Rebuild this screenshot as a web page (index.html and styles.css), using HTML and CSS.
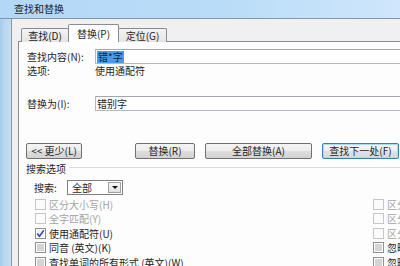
FILE: index.html
```html
<!DOCTYPE html>
<html lang="zh-CN">
<head>
    <meta charset="UTF-8">
    <title>查找和替换</title>
    <link rel="stylesheet" href="styles.css">
</head>
<body>
    <div class="titlebar">查找和替换</div>
    <div class="window-body">
        <div class="frame"></div>
        <div class="client">
            <div class="tabs">
                <div class="tab tab-find">查找(D)</div>
                <div class="tab tab-replace active">替换(P)</div>
                <div class="tab tab-goto">定位(G)</div>
            </div>
            <div class="panel">
                <div class="field-row">
                    <span class="field-label">查找内容(N):</span>
                    <div class="textbox"><span class="selected">错*字</span></div>
                </div>
                <div class="field-row options-row">
                    <span class="field-label">选项:</span>
                    <span>使用通配符</span>
                </div>
                <div class="field-row replace-row">
                    <span class="field-label">替换为(I):</span>
                    <div class="textbox">错别字</div>
                </div>

                <div class="buttons">
                    <button class="btn btn-less">&lt;&lt; 更少(L)</button>
                    <button class="btn btn-replace">替换(R)</button>
                    <button class="btn btn-all">全部替换(A)</button>
                    <button class="btn btn-next default">查找下一处(F)</button>
                </div>

                <div class="section-title"><span>搜索选项</span></div>
                <div class="search-row">
                    <span class="search-label">搜索:</span>
                    <div class="select">
                        <span>全部</span>
                        <span class="select-arrow"></span>
                    </div>
                </div>

                <!-- options: left / right columns -->
                <div class="checks">
                    <div class="check disabled"><span class="box"></span>区分大小写(H)</div>
                    <div class="check disabled"><span class="box"></span>区分前缀(X)</div>
                    <div class="check disabled"><span class="box"></span>全字匹配(Y)</div>
                    <div class="check disabled"><span class="box"></span>区分后缀(T)</div>
                    <div class="check checked">
                        <span class="box">
                            <svg width="9" height="9" viewBox="0 0 9 9"><path d="M1.2 4.6 L3.4 7.2 L7.8 1.4" fill="none" stroke="#2a44a8" stroke-width="1.5"/></svg>
                        </span>使用通配符(U)
                    </div>
                    <div class="check disabled"><span class="box"></span>区分全/半角(M)</div>
                    <div class="check"><span class="box"></span>同音 (英文)(K)</div>
                    <div class="check"><span class="box"></span>忽略标点符号(S)</div>
                    <div class="check"><span class="box"></span>查找单词的所有形式 (英文)(W)</div>
                    <div class="check"><span class="box"></span>忽略空格(W)</div>
                </div>
            </div>
        </div>
    </div>
</body>
</html>
```

FILE: styles.css
```css
body {
    margin: 0;
    width: 400px;
    height: 266px;
    overflow: hidden;
    background-color: #f0f0f0;
    font-family: "Noto Sans CJK SC", "Liberation Sans", sans-serif;
    font-size: 10px;
    color: #1e1e1e;
}
.titlebar {
    height: 18px;
    line-height: 17px;
    padding-left: 14px;
    background: linear-gradient(to right, #b3d8f7, #b9dcf8 55%, #cfe6fb);
    border-bottom: 1px solid #8796a5;
}
.window-body {
    display: flex;
    height: 247px;
}
.frame {
    width: 11px;
    background: linear-gradient(to right, #a8cbea, #b7d7f2 40%, #c3def4);
}
.client {
    flex: 1;
    border-left: 1px solid #8a97a4;
    padding: 5px 0 0 6px;
    overflow: hidden;
}
/* tabs */
.tabs {
    display: flex;
    align-items: flex-end;
    margin-left: 3px;
    margin-bottom: -1px;
    position: relative;
    z-index: 1;
}
.tab {
    box-sizing: border-box;
    height: 14px;
    line-height: 13px;
    text-align: center;
    border: 1px solid #898c95;
    border-bottom: none;
    background: linear-gradient(#f3f3f3, #e5e5e5);
    margin-right: -1px;
    border-radius: 2px 2px 0 0;
}
.tab-find {
    width: 48px;
}
.tab-replace {
    width: 51px;
}
.tab-goto {
    width: 49px;
}
.tab.active {
    height: 18px;
    line-height: 17px;
    background: #fff;
}
/* tab page */
.panel {
    box-sizing: border-box;
    width: 440px;
    height: 240px;
    border: 1px solid #898c95;
    background-color: #fdfdfd;
    padding: 7px 0 0 8px;
}
.field-row {
    display: flex;
    align-items: center;
    height: 15px;
}
.field-label {
    width: 68px;
    flex-shrink: 0;
}
.textbox {
    box-sizing: border-box;
    flex: 1;
    height: 15px;
    line-height: 13px;
    border: 1px solid #b5b8bf;
    border-top-color: #a3a6ad;
    background-color: #fff;
    padding-left: 1px;
}
.selected {
    display: inline-block;
    background-color: #4a9be6;
    color: #0f2440;
    padding: 0 1px;
    line-height: 12px;
}
.options-row {
    height: 12px;
}
.replace-row {
    margin-top: 20px;
}
/* buttons */
.buttons {
    display: flex;
    margin-top: 32px;
    margin-left: -1px;
}
.btn {
    box-sizing: border-box;
    height: 16px;
    padding: 0;
    font-family: inherit;
    font-size: 10px;
    line-height: 14px;
    color: #1e1e1e;
    border: 1px solid #707070;
    border-radius: 2px;
    background: linear-gradient(#f4f4f4, #ececec 50%, #dedede 50%, #d2d2d2);
}
.btn-less {
    width: 56px;
}
.btn-replace {
    width: 60px;
    margin-left: 53px;
}
.btn-all {
    width: 107px;
    margin-left: 10px;
}
.btn-next {
    width: 77px;
    margin-left: 10px;
}
.btn.default {
    border-color: #3c7fb1;
    box-shadow: inset 0 0 0 1px #a8dcf6;
    background: linear-gradient(#f6f6f6, #eeeeee 50%, #e3e3e3 50%, #d9d9d9);
}
/* search options */
.section-title {
    display: flex;
    align-items: center;
    height: 12px;
    margin-top: 3px;
    margin-left: -1px;
}
.section-title::after {
    content: "";
    flex: 1;
    margin-left: 3px;
    border-top: 1px solid #dcdcdc;
    border-bottom: 1px solid #fff;
}
.search-row {
    display: flex;
    align-items: center;
    margin-top: 6px;
    padding-left: 7px;
}
.search-label {
    width: 33px;
}
.select {
    box-sizing: border-box;
    width: 56px;
    height: 15px;
    border: 1px solid #7f7f7f;
    background-color: #fff;
    display: flex;
    align-items: center;
    justify-content: space-between;
    padding: 0 1px 0 4px;
}
.select-arrow {
    box-sizing: border-box;
    width: 13px;
    height: 11px;
    border: 1px solid #a0a0a0;
    background: linear-gradient(#f8f8f8, #e0e0e0);
    position: relative;
}
.select-arrow::after {
    content: "";
    position: absolute;
    left: 3px;
    top: 3px;
    border-left: 3px solid transparent;
    border-right: 3px solid transparent;
    border-top: 3px solid #111;
}
.checks {
    display: grid;
    grid-template-columns: 338px auto;
    grid-auto-rows: 14.5px;
    margin-top: 2px;
    padding-left: 8px;
}
.check {
    display: flex;
    align-items: center;
    white-space: nowrap;
}
.box {
    box-sizing: border-box;
    width: 11px;
    height: 11px;
    margin-right: 3px;
    border: 1px solid #8f8f8f;
    background-color: #fff;
    box-shadow: inset 0 0 0 1px #fff, inset 0 0 0 5px #d4d4d4;
    display: flex;
    align-items: center;
    justify-content: center;
}
.check.disabled {
    color: #a3a3a3;
}
.check.disabled .box {
    border-color: #c6c6c6;
    box-shadow: none;
    background-color: #fbfbfb;
}
.check.checked .box {
    box-shadow: inset 0 0 0 1px #fff, inset 0 0 0 5px #eef0f5;
}
```
